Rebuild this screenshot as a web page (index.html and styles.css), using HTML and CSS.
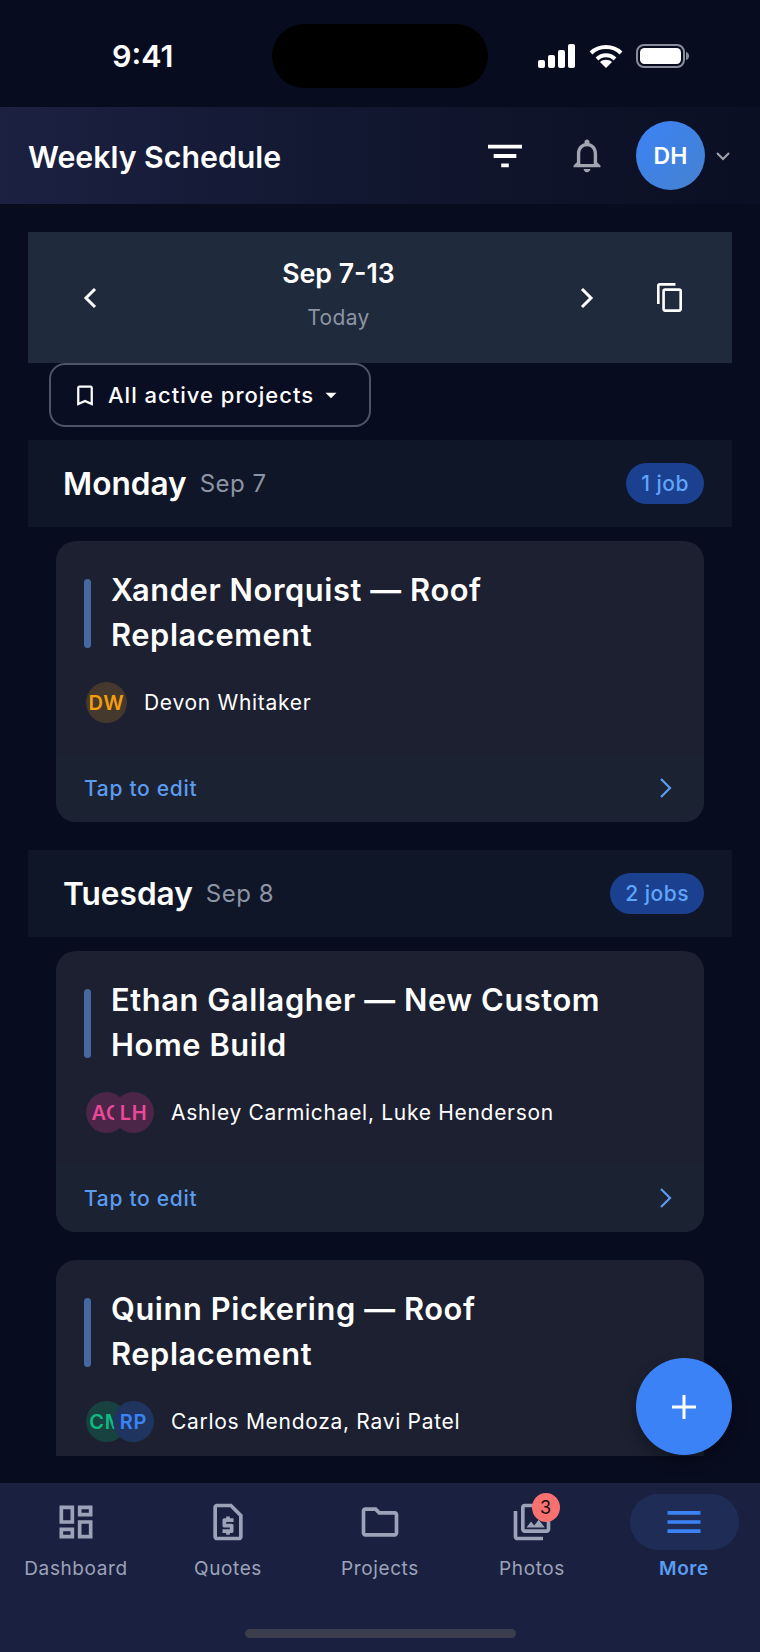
FILE: index.html
```html
<!DOCTYPE html>
<html lang="en">
<head>
    <meta charset="UTF-8">
    <meta name="viewport" content="width=device-width, initial-scale=1.0">
    <title>Weekly Schedule</title>
    <link rel="stylesheet" href="styles.css">
</head>
<body>
    <div class="app">
        <!-- Status bar -->
        <div class="status-bar">
            <div class="status-time">9:41</div>
            <div class="island"></div>
            <div class="status-icons">
                <svg width="38" height="24" viewBox="0 0 38 24" fill="#fff"><rect x="0" y="16" width="7" height="8" rx="2"/><rect x="10" y="11" width="7" height="13" rx="2"/><rect x="20" y="6" width="7" height="18" rx="2"/><rect x="30" y="0" width="7" height="24" rx="2"/></svg>
                <svg width="34" height="24" viewBox="0 0 34 24" fill="none" stroke="#fff" stroke-width="4"><path d="M2 9C10 1 24 1 32 9"/><path d="M8 15C13 10 21 10 26 15"/><path d="M17 24l-6-6c3-3 9-3 12 0z" fill="#fff" stroke="none"/></svg>
                <svg width="54" height="24" viewBox="0 0 54 24"><rect x="1" y="1" width="47" height="22" rx="7" fill="none" stroke="#8a8d99" stroke-width="2"/><rect x="4" y="4" width="41" height="16" rx="4.5" fill="#fff"/><path d="M50 8c2 .5 3 2 3 4s-1 3.500-3 4z" fill="#8a8d99"/></svg>
            </div>
        </div>

        <!-- Header -->
        <header class="top-bar">
            <div class="top-title">Weekly Schedule</div>
            <svg class="top-filter" width="34" height="34" viewBox="3 3 18 18" fill="#fff"><path d="M10 18h4v-2h-4v2zM3 6v2h18V6H3zm3 7h12v-2H6v2z"/></svg>
            <svg class="top-bell" width="34" height="37" viewBox="2 1 20 22" fill="#a1a5b0"><path d="M12 22c1.100 0 2-.9 2-2h-4c0 1.100.9 2 2 2zm6-6v-5c0-3.070-1.630-5.640-4.500-6.320V4c0-.83-.67-1.500-1.500-1.500s-1.500.67-1.500 1.500v.68C7.640 5.360 6 7.920 6 11v5l-2 2v1h16v-1l-2-2zm-2 1H8v-6c0-2.480 1.510-4.500 4-4.500s4 2.020 4 4.500v6z"/></svg>
            <div class="top-avatar">DH</div>
            <svg class="top-caret" width="18" height="12" viewBox="0 0 18 12" fill="none" stroke="#a1a5b0" stroke-width="2"><path d="M3 3l6 6 6-6"/></svg>
        </header>

        <!-- Scrolling content -->
        <main class="content">
            <div class="week-bar">
                <svg class="week-arrow" width="16" height="24" viewBox="0 0 16 24" fill="none" stroke="#fff" stroke-width="3"><path d="M13 3L4 12l9 9"/></svg>
                <div class="week-label">
                    <div class="week-range">Sep 7-13</div>
                    <div class="week-today">Today</div>
                </div>
                <svg class="week-arrow" width="16" height="24" viewBox="0 0 16 24" fill="none" stroke="#fff" stroke-width="3"><path d="M3 3l9 9-9 9"/></svg>
                <svg class="week-copy" width="25" height="29" viewBox="2 1 19 22" fill="#fff"><path d="M16 1H4c-1.100 0-2 .9-2 2v14h2V3h12V1zm3 4H8c-1.100 0-2 .9-2 2v14c0 1.100.9 2 2 2h11c1.100 0 2-.9 2-2V7c0-1.100-.9-2-2-2zm0 16H8V7h11v14z"/></svg>
            </div>

            <div class="filter-row">
                <div class="filter-chip">
                    <svg width="18" height="23" viewBox="4 2 16 20" fill="#fff"><path d="M17 3H7c-1.100 0-2 .9-2 2v16l7-3 7 3V5c0-1.100-.9-2-2-2zm0 15l-5-2.180L7 18V5h10v13z"/></svg>
                    <span>All active projects</span>
                    <svg class="filter-caret" width="22" height="22" viewBox="0 0 24 24" fill="#fff"><path d="M6 9.500l6 6 6-6z"/></svg>
                </div>
            </div>

            <section class="day">
                <div class="day-head">
                    <span class="day-name">Monday</span>
                    <span class="day-date">Sep 7</span>
                    <span class="day-count">1 job</span>
                </div>
                <article class="job">
                    <div class="job-body">
                        <div class="job-title-row">
                            <div class="job-stripe"></div>
                            <h2 class="job-title">Xander Norquist — Roof Replacement</h2>
                        </div>
                        <div class="job-crew">
                            <div class="crew-avatars">
                                <div class="crew-avatar amber">DW</div>
                            </div>
                            <span>Devon Whitaker</span>
                        </div>
                    </div>
                    <div class="job-foot">
                        <span>Tap to edit</span>
                        <svg width="18" height="24" viewBox="0 0 18 24" fill="none" stroke="#5b9cf0" stroke-width="2.200"><path d="M4 3l9 9-9 9"/></svg>
                    </div>
                </article>
            </section>

            <section class="day">
                <div class="day-head">
                    <span class="day-name">Tuesday</span>
                    <span class="day-date">Sep 8</span>
                    <span class="day-count">2 jobs</span>
                </div>
                <article class="job">
                    <div class="job-body">
                        <div class="job-title-row">
                            <div class="job-stripe"></div>
                            <h2 class="job-title">Ethan Gallagher — New Custom Home Build</h2>
                        </div>
                        <div class="job-crew">
                            <div class="crew-avatars">
                                <div class="crew-avatar pink">AC</div>
                                <div class="crew-avatar pink">LH</div>
                            </div>
                            <span>Ashley Carmichael, Luke Henderson</span>
                        </div>
                    </div>
                    <div class="job-foot">
                        <span>Tap to edit</span>
                        <svg width="18" height="24" viewBox="0 0 18 24" fill="none" stroke="#5b9cf0" stroke-width="2.200"><path d="M4 3l9 9-9 9"/></svg>
                    </div>
                </article>
                <article class="job">
                    <div class="job-body">
                        <div class="job-title-row">
                            <div class="job-stripe"></div>
                            <h2 class="job-title">Quinn Pickering — Roof Replacement</h2>
                        </div>
                        <div class="job-crew">
                            <div class="crew-avatars">
                                <div class="crew-avatar green">CM</div>
                                <div class="crew-avatar blue">RP</div>
                            </div>
                            <span>Carlos Mendoza, Ravi Patel</span>
                        </div>
                    </div>
                </article>
            </section>
        </main>

        <button class="fab">
            <svg width="28" height="28" viewBox="0 0 28 28" stroke="#fff" stroke-width="3"><path d="M14 2v24M2 14h24"/></svg>
        </button>

        <!-- Bottom navigation -->
        <nav class="tabs">
            <div class="tab">
                <div class="tab-icon"><svg width="44" height="44" viewBox="0 0 24 24" fill="#9ca3b8"><path d="M19 5v2h-4V5h4M9 5v6H5V5h4m10 8v6h-4v-6h4M9 17v2H5v-2h4M21 3h-8v6h8V3zM11 3H3v10h8V3zm10 8h-8v10h8V11zm-10 4H3v6h8v-6z"/></svg></div>
                <span>Dashboard</span>
            </div>
            <div class="tab">
                <div class="tab-icon"><svg width="44" height="44" viewBox="0 0 24 24" fill="#9ca3b8"><path d="M14 2H6C4.900 2 4.010 2.900 4.010 4L4 20c0 1.100.89 2 1.990 2H18c1.100 0 2-.9 2-2V8l-6-6zm4 18H6V4h7.170L18 8.830V20zM15 12h-4v1h3c.55 0 1 .45 1 1v3c0 .55-.45 1-1 1h-1v1h-2v-1H9v-2h4v-1h-3c-.55 0-1-.45-1-1v-3c0-.55.45-1 1-1h1V9h2v1h2v2z"/></svg></div>
                <span>Quotes</span>
            </div>
            <div class="tab">
                <div class="tab-icon"><svg width="44" height="44" viewBox="0 0 24 24" fill="#9ca3b8"><path d="M9.170 6l2 2H20v10H4V6h5.170M10 4H4c-1.100 0-1.990.9-1.990 2L2 18c0 1.100.9 2 2 2h16c1.100 0 2-.9 2-2V8c0-1.100-.9-2-2-2h-8l-2-2z"/></svg></div>
                <span>Projects</span>
            </div>
            <div class="tab">
                <div class="tab-icon">
                    <svg width="44" height="44" viewBox="0 0 24 24" fill="#9ca3b8"><path d="M20 4v12H8V4h12m0-2H8c-1.100 0-2 .9-2 2v12c0 1.100.9 2 2 2h12c1.100 0 2-.9 2-2V4c0-1.100-.9-2-2-2zm-8.500 9.670l1.690 2.260 2.480-3.100L19 15H9zM2 6v14c0 1.100.9 2 2 2h14v-2H4V6H2z"/></svg>
                    <div class="tab-badge">3</div>
                </div>
                <span>Photos</span>
            </div>
            <div class="tab active">
                <div class="tab-icon"><svg width="44" height="44" viewBox="0 0 24 24" fill="#3b82f6"><path d="M3 18h18v-2H3v2zm0-5h18v-2H3v2zm0-7v2h18V6H3z"/></svg></div>
                <span>More</span>
            </div>
            <div class="home-bar"></div>
        </nav>
    </div>
</body>
</html>
```

FILE: styles.css
```css
* {
    box-sizing: border-box;
}

body {
    margin: 0;
    background-color: #080c1f;
    color: white;
    font-family: 'Inter', 'Noto Sans', sans-serif;
}

.app {
    display: flex;
    flex-direction: column;
    width: 760px;
    height: 1652px;
    position: relative;
    overflow: hidden;
}

/* Status bar */
.status-bar {
    display: grid;
    grid-template-columns: 272px 216px 272px;
    height: 107px;
    flex: none;
    padding-top: 24px;
}

.status-time {
    padding: 14px 0 0 112px;
    font-size: 30.5px;
    font-weight: 600;
    line-height: 36px;
}

.island {
    height: 64px;
    border-radius: 32px;
    background-color: black;
}

.status-icons {
    display: flex;
    align-items: center;
    gap: 13px;
    height: 64px;
    padding-left: 50px;
}

/* Header */
.top-bar {
    display: flex;
    align-items: center;
    height: 97px;
    flex: none;
    padding-left: 28px;
    background: linear-gradient(90deg, #1c2142 0%, #151a36 30%, #0e1329 75%, #0b0f24 100%);
}

.top-title {
    flex: 1;
    padding-top: 3px;
    font-size: 30.3px;
    font-weight: 600;
}

.top-filter {
    margin-right: 48px;
}

.top-bell {
    margin-right: 32px;
}

.top-avatar {
    display: flex;
    align-items: center;
    justify-content: center;
    width: 69px;
    height: 69px;
    flex: none;
    border-radius: 50%;
    background: linear-gradient(135deg, #3b82f6, #4582cf);
    font-size: 23px;
    font-weight: 600;
}

.top-caret {
    margin: 0 28px 0 9px;
}

/* Content */
.content {
    flex: 1;
    min-height: 0;
    overflow: hidden;
    padding: 28px 28px 0;
}

.week-bar {
    display: flex;
    align-items: center;
    height: 131px;
    padding: 0 50px 0 54px;
    background-color: #1f2a3c;
}

.week-label {
    flex: 1;
    padding-bottom: 10px;
    text-align: center;
}

.week-range {
    font-size: 26.7px;
    font-weight: 600;
    line-height: 36px;
}

.week-today {
    margin-top: 14px;
    color: #8d94a3;
    font-size: 21px;
    line-height: 26px;
    letter-spacing: 0.4px;
}

.week-copy {
    margin-left: 62px;
}

.filter-row {
    display: flex;
    padding-left: 21px;
    margin-bottom: 13px;
}

.filter-chip {
    display: flex;
    align-items: center;
    gap: 14px;
    width: 322px;
    height: 64px;
    padding-left: 25px;
    border: 2px solid #4e5566;
    border-radius: 16px;
    background-color: #0a0e22;
    font-size: 22px;
    font-weight: 500;
    letter-spacing: 1px;
    white-space: nowrap;
}

.filter-caret {
    margin-left: -8px;
}

.day {
    margin-bottom: 28px;
}

.day-head {
    display: flex;
    align-items: center;
    gap: 13px;
    height: 87px;
    padding: 0 28px 0 35px;
    margin-bottom: 14px;
    background-color: #0f1628;
}

.day-name {
    font-size: 31.6px;
    font-weight: 600;
    line-height: 40px;
}

.day-date {
    color: #8d94a3;
    font-size: 24px;
    letter-spacing: 0.5px;
}

.day-count {
    margin-left: auto;
    padding: 0 15px;
    border-radius: 21px;
    background-color: #1b408f;
    color: #60a5fa;
    font-size: 21px;
    font-weight: 500;
    line-height: 41px;
    letter-spacing: 0.5px;
}

.job {
    margin: 0 28px 28px;
    border-radius: 20px;
    background-color: #1c2030;
    overflow: hidden;
}

.job:last-child {
    margin-bottom: 0;
}

.job-body {
    padding: 27px 28px 31px;
}

.job-title-row {
    display: flex;
    gap: 20px;
}

.job-stripe {
    width: 7px;
    height: 69px;
    margin-top: 11px;
    flex: none;
    border-radius: 4px;
    background-color: #44689f;
}

.job-title {
    margin: 0;
    font-size: 30.8px;
    font-weight: 600;
    line-height: 44.5px;
    letter-spacing: 0.6px;
}

.job-crew {
    display: flex;
    align-items: center;
    gap: 17px;
    margin-top: 25px;
    padding-left: 2px;
    font-size: 21px;
    letter-spacing: 0.7px;
}

.crew-avatars {
    display: flex;
}

.crew-avatar {
    display: flex;
    align-items: center;
    justify-content: center;
    width: 41px;
    height: 41px;
    border-radius: 50%;
    font-size: 20px;
    font-weight: 600;
    overflow: hidden;
}

.crew-avatar + .crew-avatar {
    margin-left: -14px;
}

.amber {
    background-color: #44392c;
    color: #f59e0b;
}

.pink {
    background-color: #4c2648;
    color: #ec4899;
}

.green {
    background-color: #17423f;
    color: #10b981;
}

.blue {
    background-color: #1f3560;
    color: #3b82f6;
}

.job-foot {
    display: flex;
    align-items: center;
    justify-content: space-between;
    height: 68px;
    padding: 0 29px 0 28px;
    background-color: #1b2231;
    color: #5b9cf0;
    font-size: 21px;
    font-weight: 500;
    letter-spacing: 0.7px;
}

/* Floating button */
.fab {
    position: absolute;
    left: 636px;
    top: 1358px;
    display: flex;
    align-items: center;
    justify-content: center;
    width: 96px;
    height: 97px;
    border: none;
    border-radius: 50%;
    background-color: #3b82f6;
    box-shadow: 0 8px 15px rgba(0, 0, 0, 0.3);
}

/* Bottom navigation */
.tabs {
    display: grid;
    grid-template-columns: repeat(5, 152px);
    height: 169px;
    margin-top: 27px;
    flex: none;
    align-content: start;
    padding-top: 11px;
    position: relative;
    background-color: #1a2040;
}

.tab {
    display: flex;
    flex-direction: column;
    align-items: center;
    color: #9ca3b8;
    font-size: 19px;
    letter-spacing: 0.6px;
}

.tab-icon {
    display: flex;
    align-items: center;
    justify-content: center;
    width: 109px;
    height: 56px;
    margin-bottom: 7px;
    border-radius: 28px;
    position: relative;
}

.tab.active {
    color: #5b9cf0;
    font-weight: 600;
}

.tab.active .tab-icon {
    background-color: #1f2c55;
}

.tab-badge {
    position: absolute;
    top: -1px;
    right: 27px;
    width: 28px;
    height: 29px;
    border-radius: 50%;
    background-color: #f87171;
    color: #111;
    font-size: 18px;
    line-height: 29px;
    text-align: center;
    letter-spacing: 0;
}

.home-bar {
    position: absolute;
    left: 245px;
    bottom: 14px;
    width: 271px;
    height: 9px;
    border-radius: 5px;
    background-color: #3a3e4c;
}
```
